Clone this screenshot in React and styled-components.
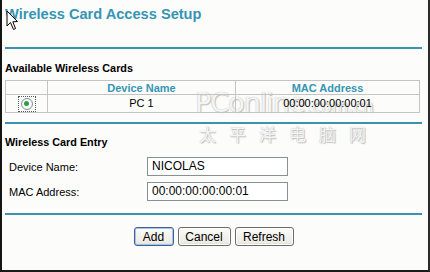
import React from "react";
import styled, { createGlobalStyle } from "styled-components";

const Global = createGlobalStyle`
  html, body { margin: 0; padding: 0; background: #fff; }
  body { font-family: "Liberation Sans", Arial, sans-serif; }
  * { box-sizing: border-box; }
`;

const Frame = styled.div`
  position: relative;
  z-index: 0;
  width: 430px;
  height: 272px;
  overflow: hidden;
  background: #fcfcfb;
  border-left: 2px solid #151515;
  border-right: 2px solid #2a2a2a;
  border-bottom: 2px solid #1a1a1a;
  padding: 0 6px 0 3px;
  color: #000;
`;

const Title = styled.h1`
  margin: 4px 0 0 0;
  font-size: 14.6px;
  line-height: 20px;
  font-weight: bold;
  color: #3595b3;
`;

const Rule = styled.div`
  height: 2px;
  background: #3b92ad;
  margin-top: ${(p) => p.$top}px;
`;

const Heading = styled.h2`
  margin: ${(p) => p.$top}px 0 0 0;
  font-size: 10.8px;
  line-height: 14px;
  font-weight: bold;
`;

const Table = styled.table`
  margin-top: 5px;
  width: 414px;
  border-collapse: collapse;
  table-layout: fixed;
  font-size: 11px;
`;

const Th = styled.th`
  border: 1px solid #c4c4c4;
  height: 14px;
  padding: 0;
  color: #3595b3;
  font-weight: bold;
  font-size: 11px;
  line-height: 12px;
  text-align: center;
`;

const Td = styled.td`
  border: 1px solid #c4c4c4;
  height: 18px;
  padding: 0;
  text-align: center;
  line-height: 15px;
`;

const FocusBox = styled.span`
  display: inline-flex;
  align-items: center;
  justify-content: center;
  width: 18px;
  height: 16px;
  border: 1px dotted #555;
  vertical-align: middle;
`;

const Radio = styled.span`
  display: inline-flex;
  align-items: center;
  justify-content: center;
  width: 12px;
  height: 12px;
  border-radius: 50%;
  border: 1px solid #7e94a6;
  background: radial-gradient(circle, #fff 40%, #e4e9ec 100%);
  &::after {
    content: "";
    width: 5px;
    height: 5px;
    border-radius: 50%;
    background: #2f9e3c;
  }
`;

const FormRow = styled.div`
  display: flex;
  align-items: center;
  margin-top: ${(p) => p.$top}px;
  font-size: 11px;
`;

const Label = styled.label`
  width: 142px;
  padding-left: 4px;
`;

const Input = styled.div`
  width: 141px;
  height: 19px;
  border: 1px solid #8a8f94;
  background: #fff;
  font-size: 12px;
  line-height: 17px;
  padding-left: 4px;
`;

const Buttons = styled.div`
  display: flex;
  justify-content: center;
  gap: 4px;
  margin-top: 12px;
`;

const Button = styled.button`
  height: 19px;
  width: ${(p) => p.$w}px;
  padding: 0;
  font-family: "Liberation Sans", Arial, sans-serif;
  font-size: 12px;
  color: #000;
  border-radius: 3px;
  border: 1px solid ${(p) => (p.$primary ? "#3d5f9a" : "#6b6b6b")};
  box-shadow: inset 0 0 0 1px ${(p) => (p.$primary ? "#a9c2ea" : "#fff")};
  background: linear-gradient(#fbfbf8, #ecebe4 85%, #d8d6cc);
`;

const Watermark = styled.div`
  position: absolute;
  z-index: -1;
  left: 193px;
  top: 88px;
  color: rgba(255, 255, 255, 0.9);
  text-shadow: 0 0 1px #a8a8a8, 1px 1px 1px rgba(140, 140, 140, 0.5);
  pointer-events: none;
`;

const WmTop = styled.div`
  display: flex;
  align-items: baseline;
  font-family: "DejaVu Sans", sans-serif;
  line-height: 30px;
`;

const WmBig = styled.span`
  font-size: 27px;
  letter-spacing: -1px;
`;

const WmSmall = styled.span`
  font-size: 17px;
  margin-left: 2px;
`;

const WmCn = styled.div`
  font-family: "Noto Sans CJK SC", sans-serif;
  font-size: 17px;
  letter-spacing: 13px;
  line-height: 20px;
  margin-top: 3px;
  margin-left: 4px;
`;

const Cursor = styled.svg`
  position: absolute;
  left: 4px;
  top: 10px;
`;

export default function App() {
  return (
    <>
      <Global />
      <Frame>
        <Title>Wireless Card Access Setup</Title>
        <Rule $top={23} />
        <Heading $top={12}>Available Wireless Cards</Heading>
        <Table>
          <colgroup>
            <col style={{ width: 42 }} />
            <col style={{ width: 188 }} />
            <col style={{ width: 184 }} />
          </colgroup>
          <thead>
            <tr>
              <Th></Th>
              <Th>Device Name</Th>
              <Th>MAC Address</Th>
            </tr>
          </thead>
          <tbody>
            <tr>
              <Td>
                <FocusBox>
                  <Radio />
                </FocusBox>
              </Td>
              <Td>PC 1</Td>
              <Td>00:00:00:00:00:01</Td>
            </tr>
          </tbody>
        </Table>
        <Rule $top={9} />
        <Heading $top={11}>Wireless Card Entry</Heading>
        <FormRow $top={8}>
          <Label>Device Name:</Label>
          <Input>NICOLAS</Input>
        </FormRow>
        <FormRow $top={6}>
          <Label>MAC Address:</Label>
          <Input>00:00:00:00:00:01</Input>
        </FormRow>
        <Rule $top={12} />
        <Buttons>
          <Button $w={40} $primary>Add</Button>
          <Button $w={53}>Cancel</Button>
          <Button $w={59}>Refresh</Button>
        </Buttons>
        <Watermark>
          <WmTop>
            <WmBig>PConline</WmBig>
            <WmSmall>.com.cn</WmSmall>
          </WmTop>
          <WmCn>太平洋电脑网</WmCn>
        </Watermark>
        <Cursor width="13" height="21" viewBox="0 0 13 21">
          <path d="M1 1 L1 16 L4.5 12.5 L7.5 19.5 L9.5 18.5 L6.8 11.8 L11.5 11.5 Z" fill="#fff" stroke="#000" strokeWidth="1" strokeLinejoin="miter" />
        </Cursor>
      </Frame>
    </>
  );
}
